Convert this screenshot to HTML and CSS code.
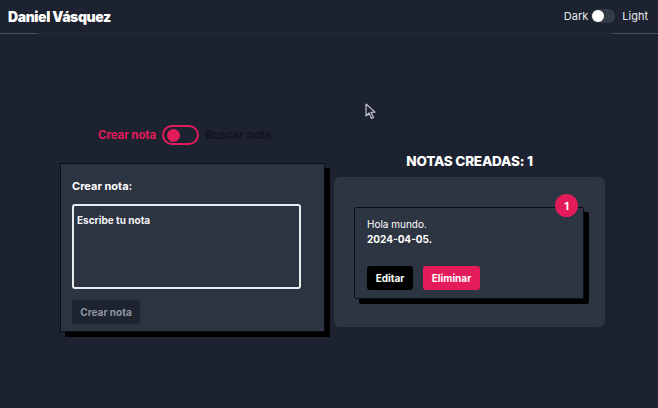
FILE: index.html
```html
<!DOCTYPE html>
<html lang="es">
<head>
<meta charset="utf-8">
<title>Notas</title>
<link rel="stylesheet" href="styles.css">
</head>
<body>
<header class="topbar">
  <h1 class="brand">Daniel Vásquez</h1>
  <div class="theme">
    <span>Dark</span>
    <span class="theme-switch"><span class="theme-knob"></span></span>
    <span class="theme-light">Light</span>
  </div>
</header>
<main class="main">
  <section class="col-left">
    <div class="mode-row">
      <span class="mode-active">Crear nota</span>
      <span class="mode-switch"><span class="mode-knob"></span></span>
      <span class="mode-inactive">Buscar nota</span>
    </div>
    <form class="create-card">
      <label class="create-label">Crear nota:</label>
      <div class="textarea"><span class="placeholder">Escribe tu nota</span></div>
      <button type="button" class="btn-create">Crear nota</button>
    </form>
  </section>
  <section class="col-right">
    <h2 class="notes-title">NOTAS CREADAS: 1</h2>
    <div class="notes-panel">
      <article class="note">
        <span class="badge">1</span>
        <p class="note-text">Hola mundo.</p>
        <p class="note-date">2024-04-05.</p>
        <div class="note-actions">
          <button type="button" class="btn-edit">Editar</button>
          <button type="button" class="btn-delete">Eliminar</button>
        </div>
      </article>
    </div>
  </section>
</main>
<svg class="cursor" width="12" height="17" viewBox="0 0 12 17"><path d="M1 1 L1 13 L4 10 L6.5 15.5 L8.5 14.6 L6 9.2 L10 9.2 Z" fill="#1e2330" stroke="#c9ccd2" stroke-width="1.1" stroke-linejoin="round"/></svg>
</body>
</html>
```
FILE: styles.css
```css
* { box-sizing: border-box; }
html, body { margin: 0; padding: 0; }
body {
  width: 658px;
  height: 408px;
  overflow: hidden;
  background: #1d2230;
  font-family: Inter, "Noto Sans", "Liberation Sans", sans-serif;
  color: #ffffff;
  position: relative;
}
.topbar {
  height: 34px;
  display: flex;
  align-items: center;
  justify-content: space-between;
  padding: 0 10px 1px 8px;
  border-bottom: 1px solid transparent;
  border-image: linear-gradient(90deg, #4a5060 0, #4a5060 36px, #232836 40px, #232836 608px, #4a5060 614px, #4a5060 100%) 1;
}
.brand {
  margin: 0;
  font-size: 14px;
  font-weight: 900;
  letter-spacing: -0.4px;
}
.theme {
  display: flex;
  align-items: center;
  gap: 3px;
  font-size: 11px;
  color: #e8e9ec;
}
.theme-light { margin-left: 4px; }
.theme-switch {
  width: 24px;
  height: 14px;
  border-radius: 7px;
  background: #343b49;
  display: flex;
  align-items: center;
  padding: 1px;
}
.theme-knob {
  width: 12px;
  height: 12px;
  border-radius: 50%;
  background: #ffffff;
}
.main {
  display: flex;
  align-items: flex-start;
  padding-left: 60px;
  gap: 9px;
}
.col-left { width: 265px; }
.mode-row {
  display: flex;
  align-items: center;
  margin: 91px 0 0 38px;
  height: 20px;
  font-size: 11.5px;
  font-weight: 700;
  letter-spacing: -0.1px;
}
.mode-active { color: #e41b5b; }
.mode-inactive { color: #11151d; margin-left: 6px; }
.mode-switch {
  width: 37px;
  height: 20px;
  margin-left: 6px;
  border: 2px solid #e41b5b;
  border-radius: 10px;
  display: flex;
  align-items: center;
  padding-left: 3px;
}
.mode-knob {
  width: 13px;
  height: 13px;
  border-radius: 50%;
  background: #e41b5b;
}
.create-card {
  margin-top: 18px;
  width: 265px;
  height: 169px;
  background: #2d3441;
  border: 1px solid #0b0d12;
  box-shadow: 5px 5px 0 #000000;
  padding: 16px 12px 0 11px;
  display: flex;
  flex-direction: column;
}
.create-label {
  font-size: 11px;
  font-weight: 700;
  height: 13px;
  line-height: 13px;
}
.textarea {
  margin-top: 11px;
  width: 229px;
  height: 85px;
  border: 2px solid #e9ebee;
  border-radius: 3px;
  padding: 2px 3px;
}
.placeholder {
  font-size: 10px;
  font-weight: 700;
  color: #f2f3f5;
}
.btn-create {
  margin-top: 11px;
  width: 68px;
  height: 24px;
  border: none;
  border-radius: 3px;
  background: #1e2330;
  color: #8f95a0;
  font-family: inherit;
  font-size: 10px;
  font-weight: 700;
  padding: 0;
}
.col-right { width: 271px; }
.notes-title {
  margin: 119px 0 0;
  height: 16px;
  line-height: 16px;
  text-align: center;
  font-size: 13.5px;
  font-weight: 800;
  letter-spacing: -0.2px;
}
.notes-panel {
  margin-top: 8px;
  height: 150px;
  background: #2e3542;
  border-radius: 6px;
  padding: 30px 0 0 20px;
}
.note {
  position: relative;
  width: 230px;
  height: 92px;
  border: 1px solid #0b0d12;
  border-radius: 2px;
  box-shadow: 5px 5px 0 #000000;
  padding: 10px 12px 0 12px;
}
.badge {
  position: absolute;
  top: -14px;
  right: 5px;
  width: 23px;
  height: 23px;
  border-radius: 50%;
  background: #e41b5b;
  color: #fff;
  font-size: 11px;
  font-weight: 700;
  display: flex;
  align-items: center;
  justify-content: center;
}
.note-text {
  margin: 0;
  font-size: 10px;
  line-height: 13px;
}
.note-date {
  margin: 2px 0 0;
  font-size: 10px;
  font-weight: 700;
  line-height: 13px;
}
.note-actions {
  display: flex;
  gap: 10px;
  margin-top: 20px;
}
.btn-edit, .btn-delete {
  height: 24px;
  border: none;
  border-radius: 3px;
  color: #fff;
  font-family: inherit;
  font-size: 10px;
  font-weight: 700;
  padding: 0;
}
.btn-edit { width: 46px; background: #000000; }
.btn-delete { width: 57px; background: #e41b5b; }
.cursor {
  position: absolute;
  left: 365px;
  top: 103px;
}
```
